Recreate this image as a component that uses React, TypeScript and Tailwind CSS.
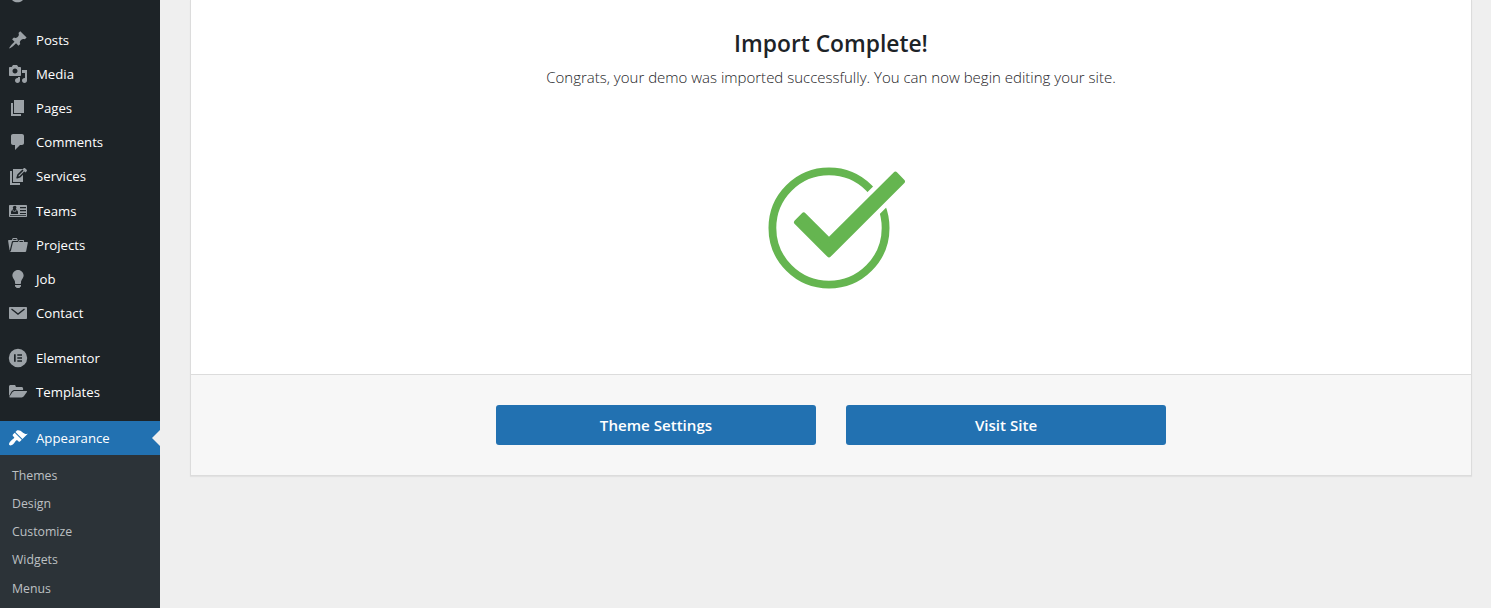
import type { ReactNode } from "react";

const icons: Record<string, ReactNode> = {
  posts: (
    <path d="M10.44 3.02l1.82-1.82 6.36 6.35-1.83 1.82c-1.05-.68-2.48-.57-3.41.36l-.75.75c-.92.93-1.04 2.35-.35 3.41l-1.83 1.82-2.41-2.41-2.8 2.79c-.42.42-3.38 2.71-3.8 2.29s1.86-3.39 2.28-3.81l2.79-2.79L4.1 9.36l1.83-1.82c1.05.69 2.48.57 3.4-.36l.75-.75c.93-.92 1.05-2.35.36-3.41z" />
  ),
  media: (
    <path d="M13 11V4c0-.55-.45-1-1-1h-1.67L9 1H5L3.67 3H2c-.55 0-1 .45-1 1v7c0 .55.45 1 1 1h10c.55 0 1-.45 1-1zM7 4.5c1.38 0 2.5 1.12 2.5 2.5S8.38 9.5 7 9.5 4.5 8.38 4.5 7 5.62 4.5 7 4.5zM14 6h5v10.5c0 1.38-1.12 2.5-2.5 2.5S14 17.88 14 16.5s1.12-2.5 2.5-2.5c.17 0 .34.02.5.05V9h-3V6zm-4 8.05V13h2v3.5c0 1.38-1.12 2.5-2.5 2.5S7 17.88 7 16.5 8.12 14 9.5 14c.17 0 .34.02.5.05z" />
  ),
  pages: <path d="M6 15V2h10v13H6zm-1 1h8v2H3V5h2v11z" />,
  comments: (
    <path d="M5 2h9c1.1 0 2 .9 2 2v7c0 1.1-.9 2-2 2h-2l-5 5v-5H5c-1.1 0-2-.9-2-2V4c0-1.1.9-2 2-2z" />
  ),
  services: (
    <>
      <path d="M4 4H2v14h10v-2H4V4z" />
      <path d="M5 2h10v13H5z" />
      <path
        d="M16.600 1.500l1.800 1.800-6.400 6.500-2.900.9.900-2.800z"
        className="fill-[#9ca2a7] stroke-[#1d2327]"
        strokeWidth="1.500"
        strokeLinejoin="round"
      />
      <path d="M15.700 1.200c.4-.4 1-.4 1.400 0l1.600 1.600c.4.4.4 1 0 1.400l-1.300 1.300-3-3z" />
    </>
  ),
  teams: (
    <path
      fillRule="evenodd"
      d="M2 4h16c.55 0 1 .45 1 1v10c0 .55-.45 1-1 1H2c-.55 0-1-.45-1-1V5c0-.55.45-1 1-1zM6.300 5a1.500 1.500 0 0 0-1.100 2.500A1.900 1.900 0 1 0 7.900 7.500 1.500 1.500 0 0 0 6.300 5zM3 13h7v-1.800c0-1.300-1-2.200-2-2.200l-1.500 1.500L5 9c-1 0-2 .9-2 2.200V13zM12 6v1.200h6V6h-6zM12 9v1.200h6V9h-6zM12 12v1h6v-1h-6zM2 14.200V15h16v-.8H2z"
    />
  ),
  projects: (
    <path d="M4 5H.78c-.37 0-.74.32-.69.84l1.56 9.99S3.5 8.47 3.86 6.7c.11-.53.61-.7.98-.7H10s-.7-2.08-.77-2.31C9.11 3.25 8.89 3 8.45 3H5.14c-.36 0-.7.23-.8.64C4.25 4.04 4 5 4 5zm4.88 0h-4s.42-1 .87-1h2.13c.48 0 1 1 1 1zM2.67 16.25c-.31.47-.76.75-1.26.75h15.73c.54 0 .92-.31 1.03-.83.44-2.19 1.68-8.44 1.68-8.44.07-.5-.3-.73-.62-.73H16V5.53c0-.16-.26-.53-.66-.53h-3.76c-.52 0-.87.58-.87.58L10 7H5.59c-.32 0-.63.19-.69.5 0 0-1.59 6.7-1.72 7.33-.07.37-.22.99-.51 1.42zM15.38 7H11s.58-1 1.13-1h2.29c.71 0 .96 1 .96 1z" />
  ),
  job: (
    <path d="M10 1c3.11 0 5.63 2.52 5.63 5.62 0 1.84-2.03 4.58-2.03 4.58-.33.44-.6 1.25-.6 1.8v1c0 .55-.45 1-1 1H8c-.55 0-1-.45-1-1v-1c0-.55-.27-1.36-.6-1.8 0 0-2.02-2.74-2.02-4.58C4.38 3.52 6.89 1 10 1zM7 16.87V16h6v.87c0 .62-.13 1.13-.75 1.13H12c0 .62-.4 1-1.02 1h-2c-.61 0-.98-.38-.98-1h-.25c-.62 0-.75-.51-.75-1.13z" />
  ),
  contact: (
    <path
      fillRule="evenodd"
      d="M2 4h16c.55 0 1 .45 1 1v10c0 .55-.45 1-1 1H2c-.55 0-1-.45-1-1V5c0-.55.45-1 1-1zM3.900 5.400L3.100 6.500 10 12.100l6.900-5.600-.8-1.100L10 10.200z"
    />
  ),
  elementor: (
    <path
      fillRule="evenodd"
      d="M10 .8a9.200 9.200 0 1 0 0 18.400A9.200 9.200 0 0 0 10 .8zM6 6.200h1.700v7.600H6zM9.300 6.200H14v1.500H9.300zM9.300 9.250H14v1.500H9.300zM9.300 12.300H14v1.500H9.300z"
    />
  ),
  templates: (
    <>
      <path d="M1 14.200V4.600C1 3.700 1.700 3 2.600 3h3.700c.9 0 1.500.7 1.500 1.500V5h5.700c.9 0 1.600.7 1.600 1.600V8H6.600c-1.200 0-2.300.7-3 1.600z" />
      <path d="M6.800 9H18.400c.6 0 .8.400.5.900l-2.900 4.200c-.5.700-1.500 1.300-2.400 1.300H2c-.6 0-.8-.4-.5-.9l2.900-4.200C4.900 9.600 5.900 9 6.800 9z" />
    </>
  ),
  appearance: (
    <path d="M14.48 11.06L7.41 3.99l1.5-1.5c.5-.56 2.3-.47 3.51.32 1.21.8 1.43 1.28 2.91 2.1 1.18.64 2.45 1.26 4.45.85zm-.71.71L6.7 4.7 4.93 6.47c-.39.39-.39 1.02 0 1.41l1.06 1.06c.39.39.39 1.03 0 1.42-.6.6-1.43 1.11-2.21 1.69-.35.26-.7.53-1.01.84C1.43 14.23.4 16.08 1.4 17.07c.99 1 2.84-.03 4.18-1.36.31-.31.58-.66.85-1.02.57-.78 1.08-1.61 1.69-2.21.39-.39 1.02-.39 1.41 0l1.06 1.06c.39.39 1.02.39 1.41 0z" />
  ),
};

const mainItems = [
  ["posts", "Posts"],
  ["media", "Media"],
  ["pages", "Pages"],
  ["comments", "Comments"],
  ["services", "Services"],
  ["teams", "Teams"],
  ["projects", "Projects"],
  ["job", "Job"],
  ["contact", "Contact"],
];

const builderItems = [
  ["elementor", "Elementor"],
  ["templates", "Templates"],
];

const submenu = ["Themes", "Design", "Customize", "Widgets", "Menus"];

function MenuItem({ icon, label, active = false }: { icon: string; label: string; active?: boolean }) {
  return (
    <a
      className={
        active
          ? "relative flex h-[34px] items-center gap-2 bg-[#2271b1] pl-2 text-[13.2px] text-white"
          : "flex h-[34.15px] items-center gap-2 pl-2 text-[13.2px] text-white"
      }
    >
      <svg viewBox="0 0 20 20" className={active ? "size-5 fill-white" : "size-5 fill-[#9ca2a7]"}>
        {icons[icon]}
      </svg>
      <span className="pt-[1.500px]">{label}</span>
      {active && (
        <span className="absolute top-[9px] right-0 border-y-8 border-r-8 border-y-transparent border-r-[#efefef]" />
      )}
    </a>
  );
}

function SuccessMark() {
  return (
    <svg viewBox="765 163 144 130" className="ml-3 h-[130px] w-[144px]">
      <circle cx="829" cy="228" r="56.600" fill="none" stroke="#65b550" strokeWidth="7.800" />
      <path
        d="M796.500 222.200L803.700 215L829 240.200L895.400 174.200L902.400 181.400L829 254.800Z"
        fill="#fff"
        stroke="#fff"
        strokeWidth="14"
      />
      <path
        d="M796.500 222.200L803.700 215L829 240.200L895.400 174.200L902.400 181.400L829 254.800Z"
        fill="#65b550"
        stroke="#65b550"
        strokeWidth="5"
        strokeLinejoin="round"
      />
    </svg>
  );
}

export default function App() {
  return (
    <div className="flex h-[608px] w-full overflow-hidden bg-[#efefef] font-['Open_Sans',sans-serif]">
      <aside className="flex w-40 shrink-0 flex-col bg-[#1d2327]">
        <div className="flex h-[23px] shrink-0 items-start pl-2">
          <svg viewBox="0 0 20 3" className="h-[3px] w-5 fill-[#9ca2a7]">
            <path d="M4 0h11c-1.400 1.500-3.300 2.300-5.500 2.300S5.400 1.500 4 0z" />
          </svg>
        </div>
        <nav className="flex flex-col">
          {mainItems.map(([icon, label]) => (
            <MenuItem key={icon} icon={icon} label={label} />
          ))}
        </nav>
        <nav className="flex flex-col pt-[11px] pb-[11.400px]">
          {builderItems.map(([icon, label]) => (
            <MenuItem key={icon} icon={icon} label={label} />
          ))}
        </nav>
        <MenuItem icon="appearance" label="Appearance" active />
        <ul className="grow bg-[#2c3338] pt-[7px] text-[12.3px] text-[#bdc0c3]">
          {submenu.map((label) => (
            <li key={label} className="flex h-[28.2px] items-center pl-3">
              {label}
            </li>
          ))}
        </ul>
      </aside>

      <main className="grow pr-[19px] pl-[30px]">
        <section className="flex h-[476px] flex-col border-x border-b border-[#dcdcdc] bg-white shadow-[0_1px_1px_rgba(0,0,0,0.05)]">
          <div className="flex h-[374px] shrink-0 flex-col items-center">
            <h1 className="mt-7 text-[22.8px] leading-8 font-semibold text-[#1d2327]">Import Complete!</h1>
            <p className="mt-[5px] text-[15px] leading-6 font-light text-[#1d2327]">
              Congrats, your demo was imported successfully. You can now begin editing your site.
            </p>
            <div className="mt-[74px]">
              <SuccessMark />
            </div>
          </div>
          <div className="flex grow items-center justify-center gap-[30px] border-t border-[#dcdcdc] bg-[#f7f7f7]">
            <button className="h-10 w-80 rounded-[3px] bg-[#2271b1] pt-px text-[15.1px] font-semibold text-white">
              Theme Settings
            </button>
            <button className="h-10 w-80 rounded-[3px] bg-[#2271b1] pt-px text-[15.1px] font-semibold text-white">
              Visit Site
            </button>
          </div>
        </section>
      </main>
    </div>
  );
}
